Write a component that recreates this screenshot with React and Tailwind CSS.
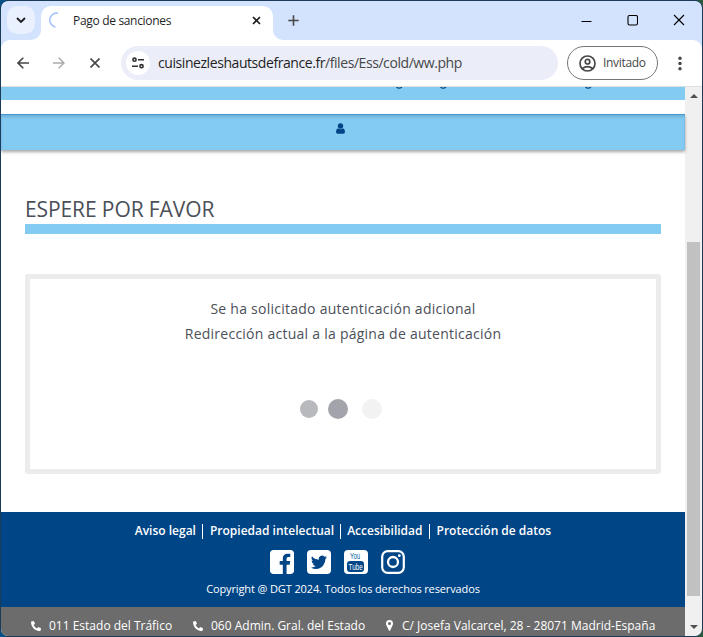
import React from 'react';
import { FaPhoneAlt } from 'react-icons/fa';

function TabStrip() {
  return (
    <div className="flex h-[39px] shrink-0 bg-[#d3e2fd]">
      <div className="flex w-[40px] shrink-0 pl-1.5 pt-[5px]">
        <div className="flex h-7 w-7 items-center justify-center rounded-[10px] bg-[#e9f0fe]">
          <svg width="10" height="8" viewBox="0 0 10 8" fill="none" stroke="#1f1f1f" strokeWidth="1.9"><path d="M1 2l4 4 4-4" /></svg>
        </div>
      </div>
      <div className="relative mt-[5px] flex h-[34px] w-[232px] shrink-0 rounded-t-[10px] bg-white">
        <svg className="absolute -left-[10px] bottom-0" width="10" height="10"><path d="M10 0v10H0A10 10 0 0 0 10 0" fill="#fff" /></svg>
        <svg className="absolute -right-[10px] bottom-0" width="10" height="10"><path d="M0 0v10h10A10 10 0 0 1 0 0" fill="#fff" /></svg>
        <svg className="ml-2 mt-[6px] shrink-0" width="16" height="17" viewBox="0 0 16 17" fill="none" stroke="#a9c7f5" strokeWidth="1.7"><path d="M9 1.200a7 7 0 0 0-2.500 13.800" /></svg>
        <span className="ml-2 mt-[7px] w-[179px] whitespace-nowrap text-[12px] leading-4 tracking-[-0.32px] text-[#1f1f1f]">Pago de sanciones</span>
        <svg className="mt-[10px] shrink-0" width="9" height="9" viewBox="0 0 9 9" stroke="#1f1f1f" strokeWidth="1.700"><path d="M1 1l7 7M8 1L1 8" /></svg>
      </div>
      <svg className="ml-[15px] mt-[14px] shrink-0" width="11" height="11" viewBox="0 0 11 11" stroke="#474747" strokeWidth="1.600"><path d="M5.500 .3v10.400M.3 5.500h10.400" /></svg>
      <div className="ml-auto mr-[17px] mt-[13px] flex h-3 items-center gap-[35px]">
        <svg width="11" height="12" stroke="#000"><path d="M.5 7.500h10" /></svg>
        <svg width="11" height="12" fill="none" stroke="#000" strokeWidth="1.100"><rect x="1" y="1.500" width="9.500" height="9.500" rx="1.500" /></svg>
        <svg width="12" height="12" stroke="#000" strokeWidth="1.100"><path d="M1 1l10 10M11 1L1 11" /></svg>
      </div>
    </div>
  );
}

function Toolbar() {
  return (
    <div className="shrink-0 bg-[#d3e2fd]">
      <div className="flex h-[47px] items-center rounded-t-[9px] border-b border-[#dedede] bg-white">
        <svg className="ml-4 shrink-0" width="12" height="12" viewBox="0 0 12 12" fill="none" stroke="#474747" strokeWidth="1.600"><path d="M12 6H1M6.300 .7L1 6l5.300 5.300" /></svg>
        <svg className="ml-6 shrink-0" width="12" height="12" viewBox="0 0 12 12" fill="none" stroke="#ababab" strokeWidth="1.500"><path d="M0 6h11M5.700 .7L11 6l-5.300 5.300" /></svg>
        <svg className="ml-[25px] shrink-0" width="10" height="10" viewBox="0 0 10 10" stroke="#474747" strokeWidth="1.600"><path d="M.5 .5l9 9M9.500 .5l-9 9" /></svg>
        <div className="ml-[21px] flex h-[34px] w-[437px] shrink-0 items-center rounded-full bg-[#ebeef8] pl-[5px]">
          <div className="flex h-6 w-6 items-center justify-center rounded-full bg-white">
            <svg width="12" height="12" viewBox="0 0 12 12" fill="none" stroke="#303030" strokeWidth="1.600"><circle cx="2.500" cy="2.700" r="1.600" /><path d="M6 2.700h6M0 9.200h6" /><circle cx="9.500" cy="9.200" r="1.600" /></svg>
          </div>
          <span className="ml-2 whitespace-nowrap text-[14px] leading-5 tracking-[-0.43px] text-[#1f1f1f]">cuisinezleshautsdefrance.fr<span className="text-[#474747]">/files/Ess/cold/ww.php</span></span>
        </div>
        <div className="ml-[9px] flex h-[34px] w-[91px] shrink-0 items-center rounded-full border border-[#747775] pl-[11px]">
          <svg width="17" height="17" viewBox="0 0 17 17" fill="none" stroke="#474747" strokeWidth="1.700"><circle cx="8.500" cy="8.500" r="7.500" /><circle cx="8.500" cy="6.700" r="2.300" /><path d="M3.300 13.500q5.200-3.800 10.400 0" /></svg>
          <span className="ml-[7px] text-[12px] leading-4 tracking-[-0.32px] text-[#474747]">Invitado</span>
        </div>
        <svg className="ml-5 shrink-0" width="4" height="15" fill="#474747"><circle cx="2" cy="2.300" r="1.700" /><circle cx="2" cy="7.500" r="1.700" /><circle cx="2" cy="12.700" r="1.700" /></svg>
      </div>
    </div>
  );
}

function SocialIcons() {
  return (
    <div className="mt-[9px] flex h-[27px] items-center gap-[13px] pr-3">
      <svg width="24" height="24" viewBox="128 128 1536 1536" fill="#fff">
        <path d="M1450 128q89 0 151 62t62 151v1110q0 89-62 151t-151 62h-262v-595h199l30-232h-229v-148q0-56 23.500-84t91.500-28l122-1v-207q-63-9-178-9-136 0-217.500 80t-81.500 226v171h-200v232h200v595H341q-89 0-151-62t-62-151V341q0-89 62-151t151-62z" />
      </svg>
      <svg width="24" height="24" viewBox="0 0 24 24" fill="#fff">
        <rect width="24" height="24" rx="4" />
        <path fill="#004586" d="M20 7.200q-.9.400-1.900.5 1-.6 1.500-1.800-1 .6-2.100.8a3.300 3.300 0 0 0-5.700 3Q7.600 9.500 5 6.300q-1.400 2.700 1 4.500-.8 0-1.500-.4 0 2.500 2.700 3.300-.7.200-1.500.1.800 2.100 3.100 2.300Q6.700 17.700 4 17.400q2.300 1.500 5 1.500 4.500 0 7.200-3.400 2.300-2.900 2.200-6.500Q19.400 8.300 20 7.200z" />
      </svg>
      <div className="flex h-6 w-6 flex-col items-center rounded-[4px] bg-white font-['Liberation_Sans',sans-serif]">
        <span className="h-[11px] scale-x-[0.62] text-[9.5px] leading-[11px] text-[#00609f]">You</span>
        <span className="flex h-[11px] w-[17px] items-center justify-center rounded-[3px] bg-[#004586] text-white"><b className="scale-x-[0.66] text-[9.5px] font-normal leading-[11px]">Tube</b></span>
      </div>
      <svg width="24" height="24" viewBox="0 0 24 24" fill="none" stroke="#fff">
        <rect x="1.200" y="1.200" width="21.600" height="21.600" rx="5.500" strokeWidth="2.200" />
        <circle cx="12" cy="12" r="5" strokeWidth="2.300" />
        <circle cx="18.300" cy="5.700" r="1.400" fill="#fff" stroke="none" />
      </svg>
    </div>
  );
}

function Footer() {
  return (
    <>
      <div className="mt-[38px] flex h-[95px] shrink-0 flex-col items-center bg-[#004586] text-white">
        <div className="mt-[11px] flex h-4 items-center whitespace-nowrap text-[12px] font-semibold leading-4">
          <span>Aviso legal</span><i className="ml-[6px] mr-[7px] h-[15px] w-px bg-white" />
          <span>Propiedad intelectual</span><i className="ml-[6px] mr-[6px] h-[15px] w-px bg-white" />
          <span>Accesibilidad</span><i className="ml-[6px] mr-[7px] h-[15px] w-px bg-white" />
          <span>Protección de datos</span>
        </div>
        <SocialIcons />
        <div className="mt-[6px] whitespace-nowrap text-[11px] font-medium leading-4 tracking-[-0.12px]">Copyright @ DGT 2024. Todos los derechos reservados</div>
      </div>
      <div className="flex h-[29px] shrink-0 items-center whitespace-nowrap bg-[#6c6c6c] pt-[8px] text-[12px] font-medium text-white">
        <FaPhoneAlt size={10} className="ml-[30px] shrink-0" />
        <span className="ml-[8px] w-[144px]">011 Estado del Tráfico</span>
        <FaPhoneAlt size={10} className="shrink-0" />
        <span className="ml-[8px] w-[175px]">060 Admin. Gral. del Estado</span>
        <svg className="shrink-0" width="7" height="11" viewBox="0 0 7 11" fill="#fff"><path fillRule="evenodd" d="M3.500 0A3.500 3.500 0 0 1 7 3.500q0 1-.4 1.800L4.100 10.500q-.6.800-1.200 0L.4 5.300Q0 4.500 0 3.500A3.500 3.500 0 0 1 3.500 0zm0 1.900a1.600 1.600 0 1 0 0 3.200 1.600 1.600 0 0 0 0-3.200z" /></svg>
        <span className="ml-[9px]">C/ Josefa Valcarcel, 28 - 28071 Madrid-España</span>
      </div>
    </>
  );
}

function Page() {
  return (
    <main className="flex w-[684px] flex-col bg-white">
      <div className="h-[13px] shrink-0 bg-[#84cbf2]">
        <svg width="684" height="4" fill="none" stroke="#004586" strokeWidth="1.200"><path d="M395.500 0q2.500 2.400 5.500 0M439.500 0q2.500 2.400 5.500 0M584.500 0q2.500 2.400 5.500 0" /></svg>
      </div>
      <div className="relative mt-[14px] flex h-[36px] shrink-0 justify-center border-t border-[#4898d0] bg-[#84cbf2] pr-[5px] pt-[8px] shadow-[0_2px_3px_rgba(0,0,0,0.35),inset_0_2px_3px_rgba(0,70,130,0.2)]">
        <svg width="9" height="11" viewBox="0 0 9 11" fill="#004586"><circle cx="4.500" cy="3" r="2.700" /><path d="M2 5.200q2.500 2.200 5 0 2 .6 2 3.700Q9 10.700 7.200 10.700H1.800Q0 10.700 0 8.900 0 5.800 2 5.200z" /></svg>
      </div>
      <h1 className="mt-[44px] h-[30px] shrink-0 pl-6 text-[21px] font-normal leading-[30px] tracking-[-0.1px] text-[#4b4f58]">ESPERE POR FAVOR</h1>
      <div className="mx-6 h-[10px] shrink-0 bg-[#84cbf2]" />
      <section className="mx-6 mt-10 flex h-[200px] shrink-0 flex-col items-center rounded-[3px] border-5 border-[#ececec] pt-[17px] text-center text-[14px] font-medium leading-[25px] tracking-[0.25px] text-[#4b4f58]">
        <p>Se ha solicitado autenticación adicional</p>
        <p>Redirección actual a la página de autenticación</p>
        <div className="mt-[53px] flex h-5 items-center">
          <i className="mr-[10px] h-[18px] w-[18px] rounded-full bg-[#b8b9bc]" />
          <i className="mr-[14px] h-5 w-5 rounded-full bg-[#a3a3ab]" />
          <i className="mr-[5px] h-5 w-5 rounded-full bg-[#f2f2f2]" />
        </div>
      </section>
      <Footer />
    </main>
  );
}

function Scrollbar() {
  return (
    <div className="flex w-[17px] flex-col items-center bg-[#f0f0f0]">
      <svg className="mt-[7px]" width="8" height="4" fill="#505050"><path d="M0 4l4-4 4 4z" /></svg>
      <div className="mt-[144px] h-[354px] w-[13px] bg-[#c1c1c1]" />
      <svg className="mt-[29px]" width="8" height="4" fill="#505050"><path d="M0 0l4 4 4-4z" /></svg>
    </div>
  );
}

export default function App() {
  return (
    <div className="h-[637px] w-[703px] bg-[linear-gradient(90deg,#00508a_50%,#285c3c_50%)] font-['Open_Sans','Noto_Sans',sans-serif]">
      <div className="flex h-full flex-col overflow-hidden rounded-[8px] border border-[#1b3b5b]">
        <TabStrip />
        <Toolbar />
        <div className="flex min-h-0 flex-1">
          <Page />
          <Scrollbar />
        </div>
      </div>
    </div>
  );
}
